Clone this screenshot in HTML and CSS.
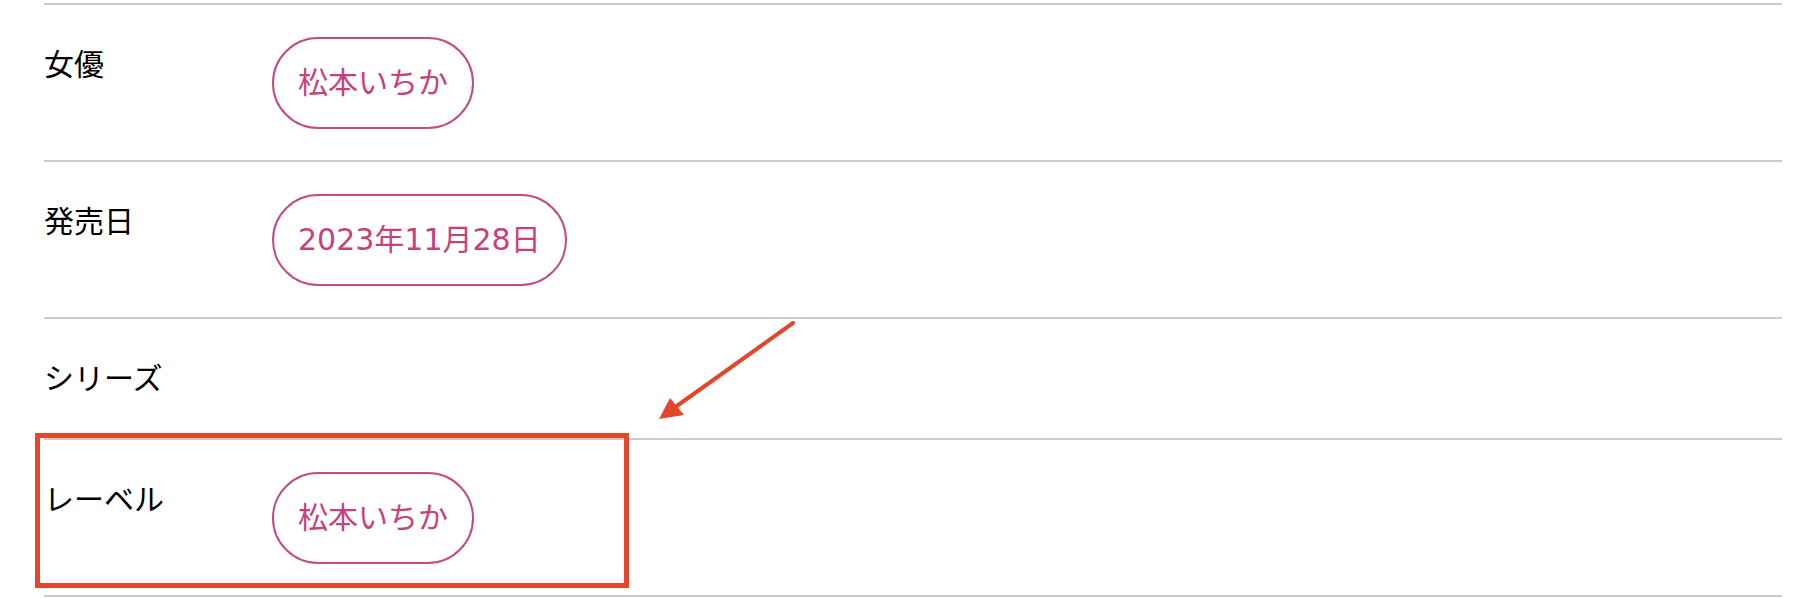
FILE: index.html
```html
<!DOCTYPE html>
<html lang="ja">
<head>
<meta charset="utf-8">
<title>作品情報</title>
<link rel="stylesheet" href="styles.css">
</head>
<body>
<div class="spec">
  <div class="row">
    <div class="label">女優</div>
    <div class="value"><a class="pill">松本いちか</a></div>
  </div>
  <div class="row">
    <div class="label">発売日</div>
    <div class="value"><a class="pill">2023年11月28日</a></div>
  </div>
  <div class="row">
    <div class="label">シリーズ</div>
    <div class="value"></div>
  </div>
  <div class="row">
    <div class="label">レーベル</div>
    <div class="value"><a class="pill">松本いちか</a></div>
  </div>
</div>
<div class="highlight"></div>
<svg class="arrow" width="1810" height="598" viewBox="0 0 1810 598">
  <line x1="793" y1="323" x2="674" y2="408" stroke="#e5452b" stroke-width="4" stroke-linecap="round"/>
  <polygon points="659,419 670,398 684,415" fill="#e5452b"/>
</svg>
</body>
</html>
```
FILE: styles.css
```css
html, body {
  margin: 0;
  padding: 0;
  background: #fff;
}
body {
  position: relative;
  width: 1810px;
  height: 598px;
  overflow: hidden;
  font-family: "Noto Sans CJK JP", sans-serif;
  color: #000;
}
.spec {
  margin: 3px 0 0 44px;
  width: 1738px;
  border-top: 2px solid #cbcbcb;
}
.row {
  display: flex;
  align-items: flex-start;
  padding: 32px 0 31px;
  border-bottom: 2px solid #cbcbcb;
}
.label {
  width: 228px;
  flex: 0 0 228px;
  font-size: 30px;
  line-height: 50px;
  padding-bottom: 6px;
}
.value {
  flex: 1;
}
.pill {
  display: inline-block;
  border: 2px solid #c64a83;
  border-radius: 48px;
  padding: 22px 24px;
  font-family: "DejaVu Sans", "Noto Sans CJK JP", sans-serif;
  font-size: 30px;
  line-height: 44px;
  color: #c8407c;
  text-decoration: none;
}
.highlight {
  position: absolute;
  left: 35px;
  top: 433px;
  width: 584px;
  height: 145px;
  border: 5px solid #e5452b;
}
.arrow {
  position: absolute;
  left: 0;
  top: 0;
}
```
